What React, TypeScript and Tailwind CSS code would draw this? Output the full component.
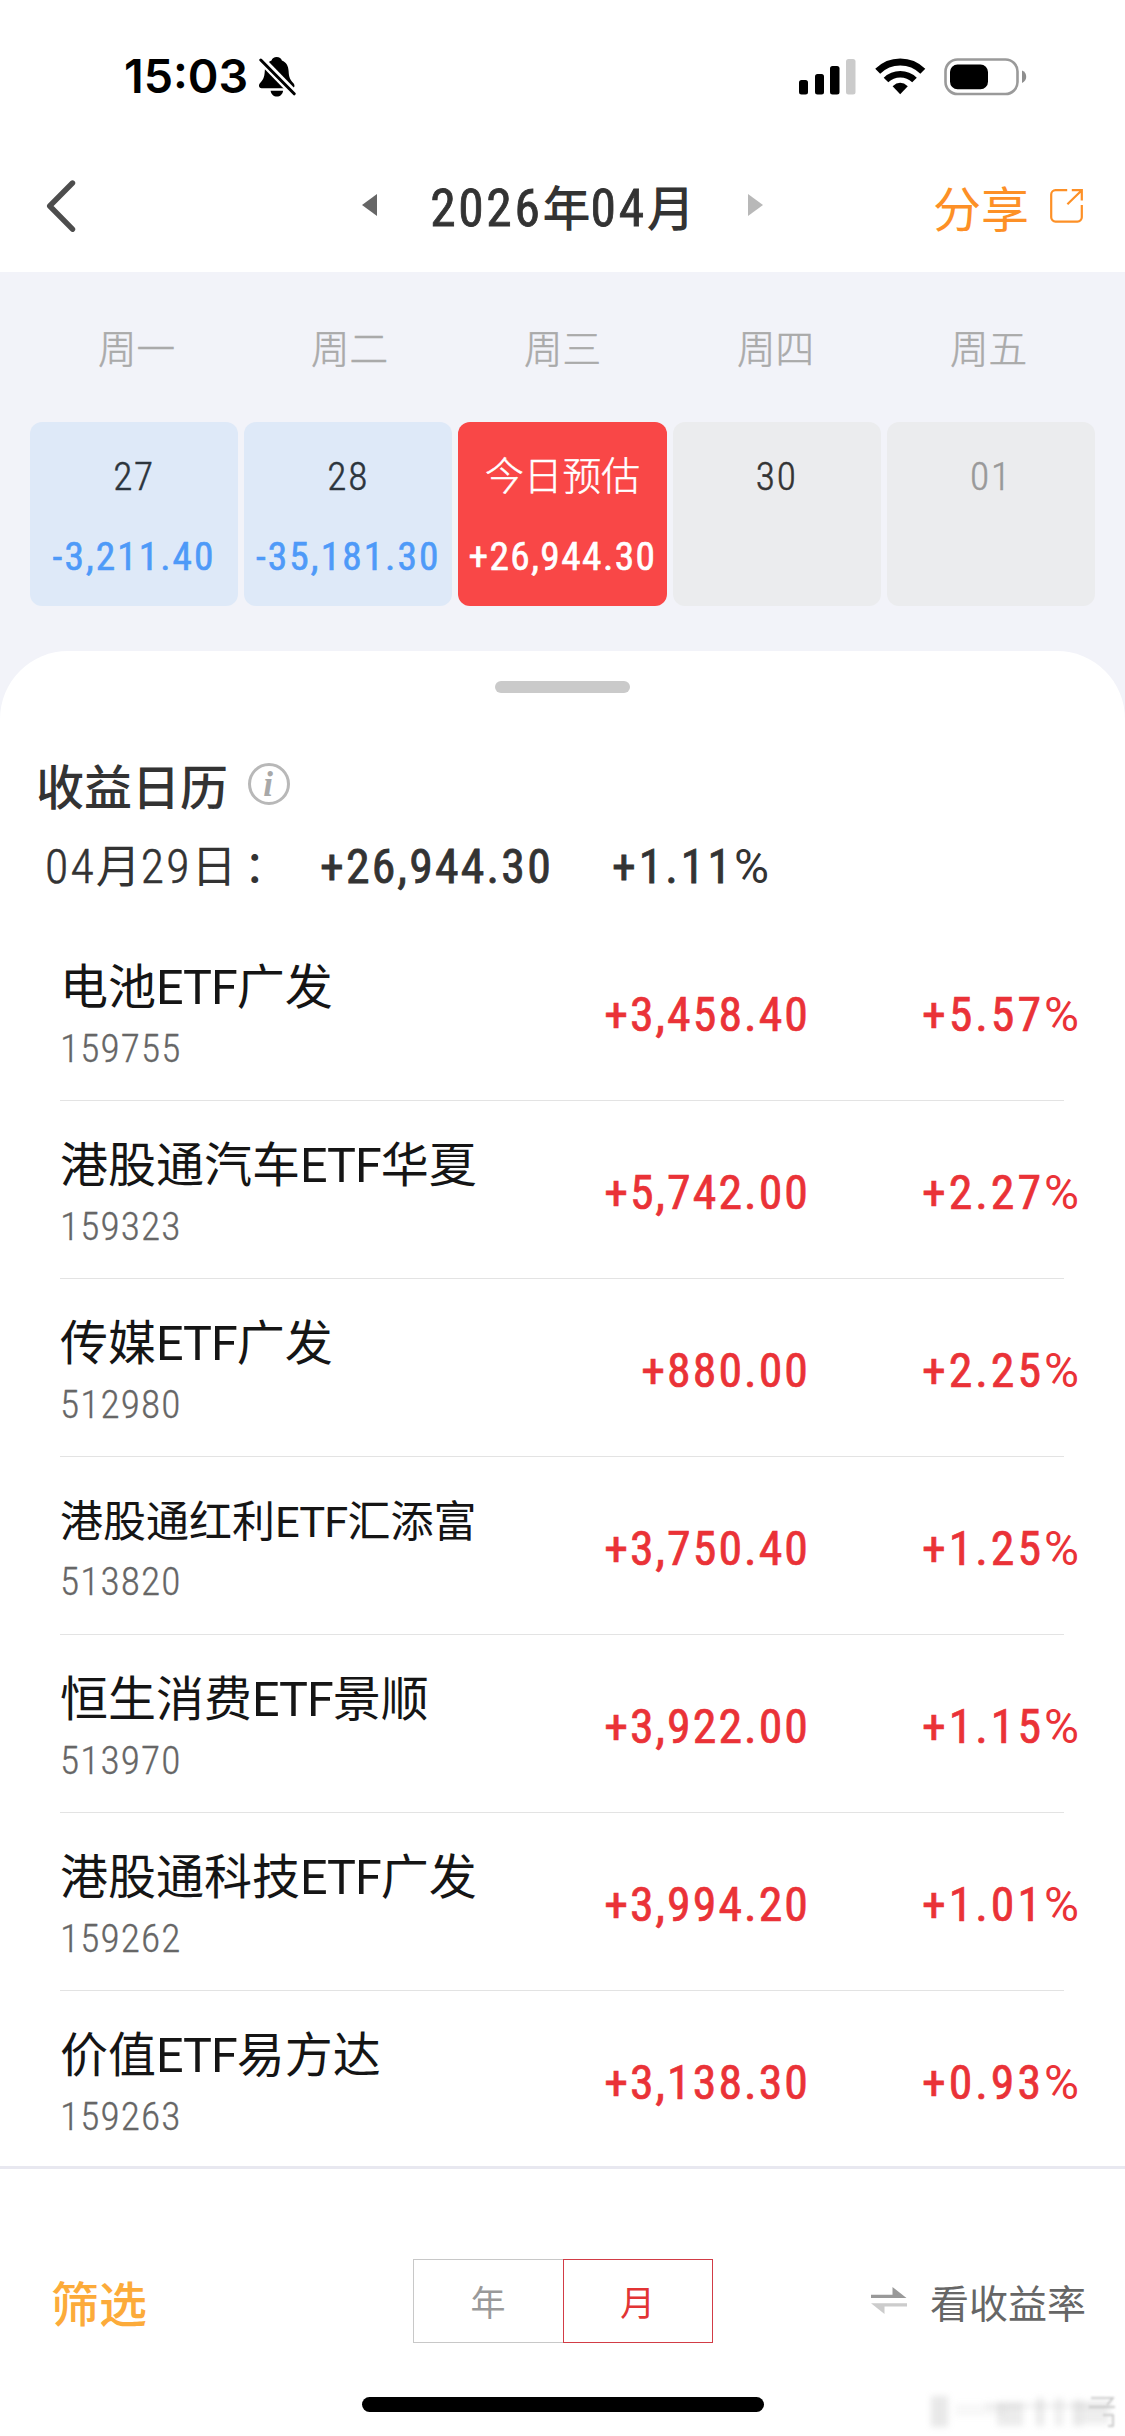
import { clsx } from 'clsx';

type Day = {
  date: string;
  profit?: string;
  tone: 'loss' | 'today' | 'empty' | 'next';
};

type Holding = {
  code: string;
  name: string;
  profit: string;
  rate: string;
};

const WEEKDAYS = ['周一', '周二', '周三', '周四', '周五'];

const DAYS: Day[] = [
  { date: '27', profit: '-3,211.40', tone: 'loss' },
  { date: '28', profit: '-35,181.30', tone: 'loss' },
  { date: '今日预估', profit: '+26,944.30', tone: 'today' },
  { date: '30', tone: 'empty' },
  { date: '01', tone: 'next' },
];

const HOLDINGS: Holding[] = [
  { code: '159755', name: '电池ETF广发', profit: '+3,458.40', rate: '+5.57%' },
  { code: '159323', name: '港股通汽车ETF华夏', profit: '+5,742.00', rate: '+2.27%' },
  { code: '512980', name: '传媒ETF广发', profit: '+880.00', rate: '+2.25%' },
  { code: '513820', name: '港股通红利ETF汇添富', profit: '+3,750.40', rate: '+1.25%' },
  { code: '513970', name: '恒生消费ETF景顺', profit: '+3,922.00', rate: '+1.15%' },
  { code: '159262', name: '港股通科技ETF广发', profit: '+3,994.20', rate: '+1.01%' },
  { code: '159263', name: '价值ETF易方达', profit: '+3,138.30', rate: '+0.93%' },
];

const NUM = 'font-["Roboto_Condensed","Roboto",sans-serif]';

const CARD_TONE = {
  loss: 'bg-[#dee9f8] text-[#2c343c]',
  today: 'bg-[#f94747] text-white',
  empty: 'bg-[#ebecee] text-[#333333]',
  next: 'bg-[#ebecee] text-[#999999]',
};

// Chinese text with its latin/digit runs set in another face and size.
const Mixed = ({ text, latin }: { text: string; latin: string }) => (
  <>
    {text.split(/([\x20-\x7e]+)/).map((part, i) =>
      i % 2 ? (
        <span key={i} className={clsx('leading-none', latin)}>
          {part}
        </span>
      ) : (
        part
      ),
    )}
  </>
);

// Percentage with a full-width percent sign after condensed digits.
const Rate = ({ value, className }: { value: string; className?: string }) => (
  <span className={clsx(NUM, 'text-[47.8px] tracking-[0.062em] whitespace-nowrap', className)}>
    {value.replace('%', '')}
    <span className='font-["Roboto",sans-serif] tracking-normal [-webkit-text-stroke:0px]'>%</span>
  </span>
);

const StatusBar = () => (
  <div className="flex h-[140px] shrink-0 items-center pt-[13px] pr-[98px] pl-[124px]">
    <span className='w-[124px] font-["Inter",sans-serif] text-[46.6px] leading-none font-semibold text-black'>15:03</span>
    <svg width="37" height="40" viewBox="0 0 37 40" className="ml-[11px]">
      <path d="M17.7 0c2.6 0 4.6 1.4 5.2 3.5 4.5 1.7 6.4 5.6 6.7 10.5.3 6.5 1.5 8.5 4.9 12.2 1.7 1.9 1.2 5.1-1.7 5.1H2.6C-.2 31.3-.7 28.2.9 26.3c3.3-3.8 4.5-5.7 4.9-12.3.3-4.9 2.3-8.8 6.7-10.5C13.1 1.4 15.1 0 17.7 0Z" />
      <path d="M11.6 33.8h12.5c-.5 3.5-3 5.8-6.2 5.8s-5.8-2.3-6.3-5.8Z" />
      <path d="M1 1.5 36.5 38" stroke="#fff" strokeWidth="8" />
      <path d="M1.8 3 35.2 36.8" stroke="#000" strokeWidth="3" strokeLinecap="round" />
    </svg>
    <svg width="57" height="36" viewBox="0 0 57 36" className="ml-auto">
      <rect x="0" y="21" width="9" height="14.5" rx="2.5" />
      <rect x="16" y="15" width="9" height="20.5" rx="2.5" />
      <rect x="31" y="7" width="9.5" height="28.5" rx="2.5" />
      <rect x="47" y="0" width="9.5" height="35.5" rx="2.5" fill="#cbcbcb" />
    </svg>
    <svg width="51" height="37" viewBox="0 0 51 37" className="ml-[19px]" fill="none" stroke="#000">
      <path d="M2.7 13.3A32 32 0 0 1 47.8 13.3" strokeWidth="7" />
      <path d="M11 22A20.5 20.5 0 0 1 39.5 22" strokeWidth="6.6" />
      <path d="M25.2 36.3 17.6 28.2Q25.2 21.5 32.8 28.2Z" fill="#000" stroke="none" />
    </svg>
    <svg width="83" height="38" viewBox="0 0 83 38" className="ml-[18px]">
      <rect x="1.5" y="1.5" width="72" height="34.5" rx="12" fill="none" stroke="#9a9a9a" strokeWidth="2.6" />
      <rect x="6" y="6.5" width="38" height="24.8" rx="7.5" />
      <path d="M78 12.5c3 1.200 4.200 3.600 4.200 6.200s-1.200 5-4.200 6.200Z" fill="#8e8e8e" />
    </svg>
  </div>
);

const NavBar = () => (
  <div className="grid h-[132px] shrink-0 grid-cols-[1fr_auto_1fr] items-center">
    <svg width="30" height="54" viewBox="0 0 30 54" className="ml-[46px]" fill="none">
      <path d="M26.5 4 3.7 27l22.8 23.2" stroke="#4d4d4d" strokeWidth="5.4" strokeLinecap="round" strokeLinejoin="round" />
    </svg>
    <div className="flex w-[402px] items-center justify-between pb-[2px]">
      <svg width="15" height="22" viewBox="0 0 15 22">
        <path d="M15 0v22L0 11Z" fill="#666666" />
      </svg>
      <h1 className="text-[48px] leading-[60px] font-medium whitespace-nowrap text-[#333333]">
        <Mixed
          text="2026年04月"
          latin='font-["Roboto_Condensed","Roboto",sans-serif] text-[1.073em] font-normal tracking-[0.052em] [-webkit-text-stroke:0.8px]'
        />
      </h1>
      <svg width="15" height="22" viewBox="0 0 15 22">
        <path d="M0 0v22l15-11Z" fill="#b8b8b8" />
      </svg>
    </div>
    <button type="button" className="mr-[42px] flex items-center justify-end text-[#fd9026]">
      <span className="text-[48px] leading-[60px]">分享</span>
      <svg width="33" height="34" viewBox="0 0 33 34" className="ml-[21px]" fill="none" stroke="currentColor" strokeWidth="2.2">
        <path d="M17.2 1.200H5.500a4.300 4.300 0 0 0-4.300 4.300v22.800a4.300 4.300 0 0 0 4.300 4.300h22a4.300 4.300 0 0 0 4.300-4.300V16" />
        <path d="M21.8 1.200h10v10.300M31.800 1.200 17.400 15.300" />
      </svg>
    </button>
  </div>
);

const WeekStrip = () => (
  <div className="px-[30px]">
    <div className="grid h-[150px] grid-cols-5 items-center pb-[3px] text-center text-[38.6px] leading-[50px] font-light text-[#aaaaaa] [-webkit-text-stroke:0.5px]">
      {WEEKDAYS.map((day) => (
        <span key={day}>{day}</span>
      ))}
    </div>
    <div className="grid grid-cols-5 gap-[6px]">
      {DAYS.map((day) => (
        <div
          key={day.date}
          className={clsx('flex h-[184px] flex-col items-center rounded-[12px] pt-[26px]', CARD_TONE[day.tone])}
        >
          <span className="text-[38.8px] leading-[50px] font-light [-webkit-text-stroke:0.5px]">
            <Mixed
              text={day.date}
              latin='font-["Roboto_Condensed","Roboto",sans-serif] text-[1.015em] tracking-[0.045em]'
            />
          </span>
          {day.profit && (
            <span
              className={clsx(
                'mt-[34px] text-[39.4px] leading-[50px] [-webkit-text-stroke:0.6px]',
                NUM,
                day.tone === 'loss' ? 'tracking-[0.052em] text-[#4e9af8]' : 'tracking-[0.036em]',
              )}
            >
              {day.profit}
            </span>
          )}
        </div>
      ))}
    </div>
  </div>
);

const HoldingRow = ({ holding }: { holding: Holding }) => (
  <li className="ml-[60px] h-[178px]">
    <div className="flex h-[177px] items-start">
      <div className="flex-1 pt-[32px]">
        <p
          className={clsx(
            'leading-[56px] whitespace-nowrap text-[#151515]',
            holding.name.length > 10 ? 'translate-y-px text-[43px]' : 'text-[48px]',
          )}
        >
          <Mixed text={holding.name} latin='font-["Roboto",sans-serif] text-[1.01em] tracking-[-0.02em]' />
        </p>
        <p
          className={clsx(
            'mt-[17px] text-[39.4px] leading-[40px] font-light tracking-[0.028em] text-[#666666] [-webkit-text-stroke:0.3px]',
            NUM,
          )}
        >
          {holding.code}
        </p>
      </div>
      <span
        className={clsx(
          'pt-[62px] text-[47.8px] leading-[60px] tracking-[0.043em] text-[#ea3237] [-webkit-text-stroke:0.7px]',
          NUM,
        )}
      >
        {holding.profit}
      </span>
      <Rate
        value={holding.rate}
        className="w-[269px] pt-[62px] text-right leading-[60px] text-[#ea3237] [-webkit-text-stroke:0.7px]"
      />
      <span className="w-[46px]" />
    </div>
    <div className="mr-[61px] h-px bg-[#e3e3e3]" />
  </li>
);

const Sheet = () => (
  <section className="mt-[45px] flex min-h-0 flex-1 flex-col rounded-t-[68px] bg-white pt-[30px]">
    <div className="mx-auto h-[12px] w-[135px] shrink-0 rounded-full bg-[#cacaca]" />
    <div className="mt-[61px] flex shrink-0 items-center pl-[36px]">
      <h2 className="text-[48px] leading-[60px] font-medium text-[#333333]">收益日历</h2>
      <span className='ml-[20px] flex size-[42px] items-center justify-center rounded-full border-[3px] border-[#b8b8b8] pr-[2px] font-["Liberation_Serif",serif] text-[35px] leading-none font-bold text-[#a8a8a8] italic'>
        i
      </span>
    </div>
    <div className="mt-[20px] flex shrink-0 items-baseline pl-[45px] text-[45px] leading-[60px] text-[#333333]">
      <span className="w-[275px] whitespace-nowrap">
        <Mixed
          text="04月29日"
          latin='font-["Roboto_Condensed","Roboto",sans-serif] text-[1.062em] font-light tracking-[0.045em] [-webkit-text-stroke:0.5px]'
        />
        <span className="pl-[7px]">：</span>
      </span>
      <span className={clsx('w-[292px] text-[47.8px] leading-none tracking-[0.046em] [-webkit-text-stroke:0.8px]', NUM)}>
        +26,944.30
      </span>
      <Rate value="+1.11%" className="leading-none [-webkit-text-stroke:0.8px]" />
    </div>
    <ul className="mt-[29px] min-h-0 flex-1 overflow-hidden">
      {HOLDINGS.map((holding) => (
        <HoldingRow key={holding.code} holding={holding} />
      ))}
    </ul>
  </section>
);

const Footer = () => (
  <footer className="h-[270px] shrink-0 border-t-[3px] border-[#e8e8f0] bg-white pt-[90px]">
    <div className="grid h-[84px] grid-cols-[1fr_auto_1fr] items-center">
      <button type="button" className="pl-[51px] text-left text-[48px] leading-[60px] font-medium text-[#fcab3a]">
        筛选
      </button>
      <div className="flex h-[84px] text-[35px]">
        <button type="button" className="w-[150px] border border-r-0 border-[#c8c8c8] text-[#999999]">
          年
        </button>
        <button type="button" className="w-[150px] border border-[#d23c46] text-[#e23434]">
          月
        </button>
      </div>
      <button type="button" className="flex items-center justify-end pr-[39px] text-[39px] leading-[50px] text-[#666666]">
        <svg width="36" height="28" viewBox="0 0 36 28" className="mr-[23px]">
          <path d="M0 7.8h21.5V0L35.5 11H0Z" fill="#999999" />
          <path d="M36 19.5H13.5V27L0 16.3h36Z" fill="#cccccc" />
        </svg>
        看收益率
      </button>
    </div>
    <div className="mx-auto mt-[54px] h-[15px] w-[402px] rounded-full bg-black" />
  </footer>
);

// Faded stamp in the bottom corner, washed out to a few soft strokes.
const Stamp = () => (
  <svg width="200" height="46" viewBox="0 0 200 46" className="absolute right-0 bottom-0">
    <g className="blur-[3px]" fill="#8a8a8a">
      <rect x="6" y="6" width="17" height="31" opacity="0.2" />
      <rect x="30" y="14" width="50" height="12" opacity="0.06" />
      <rect x="72" y="12" width="26" height="24" opacity="0.16" />
      <rect x="111" y="8" width="8" height="28" opacity="0.18" />
      <rect x="130" y="8" width="8" height="28" opacity="0.14" />
      <rect x="148" y="10" width="10" height="26" opacity="0.2" />
      <rect x="60" y="14" width="126" height="4" opacity="0.14" />
      <rect x="158" y="12" width="26" height="22" opacity="0.14" />
    </g>
    <g className="blur-[0.8px]" fill="none" stroke="#c0c0c0" strokeWidth="1.600">
      <path d="M166 8h22l-6 7M164 17h26M178 25h10v11h-5" />
    </g>
  </svg>
);

const App = () => (
  <div className='relative flex h-[2436px] w-[1125px] flex-col overflow-hidden bg-white font-["Noto_Sans_CJK_SC",sans-serif]'>
    <StatusBar />
    <NavBar />
    <main className="flex min-h-0 flex-1 flex-col bg-[#f2f3f9]">
      <WeekStrip />
      <Sheet />
    </main>
    <Footer />
    <Stamp />
  </div>
);

export default App;
